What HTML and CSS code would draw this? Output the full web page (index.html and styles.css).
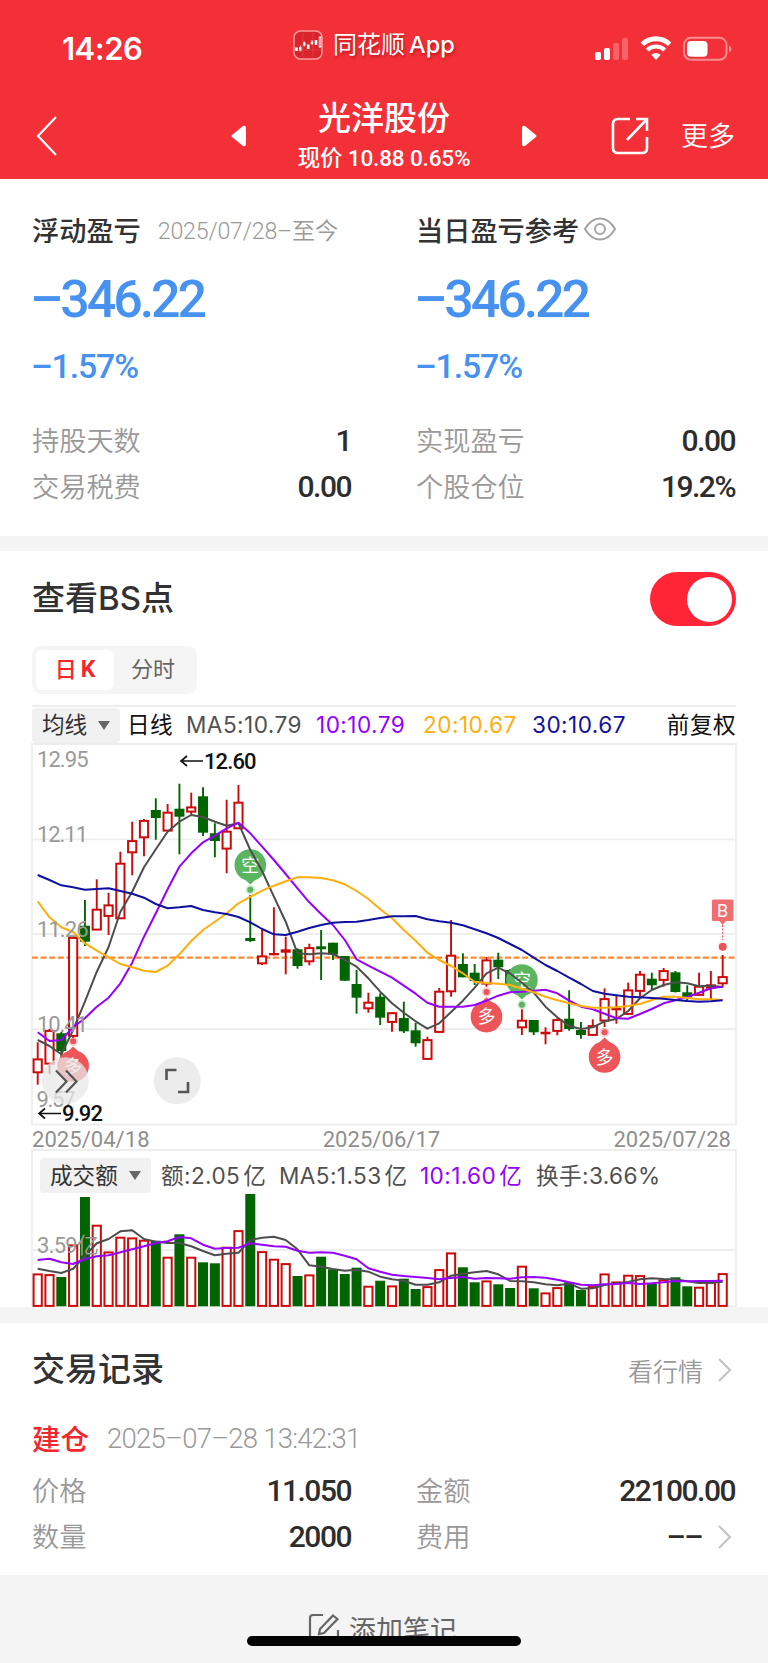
FILE: index.html
```html
<!DOCTYPE html>
<html lang="zh-CN">
<head>
    <meta charset="UTF-8">
    <meta name="viewport" content="width=device-width, initial-scale=1.0">
    <title>光洋股份</title>
    <link rel="stylesheet" href="styles.css">
</head>
<body>
    <header class="header">
        <div class="status">
            <span class="clock">14:26</span>
            <div class="app">
                <svg class="app-icon" width="30" height="30" viewBox="0 0 30 30">
                    <rect x="1" y="1" width="28" height="28" rx="6.5" fill="#d9242b" stroke="#ff9a9a" stroke-width="1.5"/>
                    <path d="M2 20h26M10 3v24M20 3v24" stroke="#ee4a50" stroke-width=".6"/>
                    <path d="M3.500 17.500v3.500M15.200 14.500v4.500M23 10v5" stroke="#fff" stroke-width="2.600"/>
                    <path d="M7.300 17v3.500M11.300 12.500v3M19 11.500v2.500M27 6.500v11" stroke="#fff" stroke-width="2.400"/>
                    <path d="M7.300 15.500v6M11.300 11.500v5M19 10v5" stroke="#fff" stroke-width=".8"/>
                    <path d="M27 8v8" stroke="#d9242b" stroke-width=".8"/>
                </svg>
                <span class="app-name">同花顺<b>App</b></span>
            </div>
            <svg class="status-icons" width="138" height="28" viewBox="0 0 138 28">
                <rect x="1" y="17" width="6" height="8" rx="1.800" fill="#fff"/>
                <rect x="10" y="13" width="6" height="12" rx="1.800" fill="#fff"/>
                <rect x="19" y="8" width="6" height="17" rx="1.800" fill="#fff" opacity=".25"/>
                <rect x="28" y="3" width="6" height="22" rx="1.800" fill="#fff" opacity=".25"/>
                <path d="M48.300 9.200a20 20 0 0 1 27.400 0" fill="none" stroke="#fff" stroke-width="5"/>
                <path d="M53.300 15a12.500 12.500 0 0 1 17.400 0" fill="none" stroke="#fff" stroke-width="4.200"/>
                <path d="M57.300 19.800q4.700-3.600 9.400 0L62 25z" fill="#fff"/>
                <rect x="90" y="2.800" width="42.500" height="22" rx="7" fill="none" stroke="#fff" stroke-opacity=".45" stroke-width="2"/>
                <rect x="93" y="6" width="20.500" height="15.800" rx="4" fill="#fff"/>
                <path d="M135 10.500q2.500 1 2.500 3.500t-2.500 3.500z" fill="#fff" opacity=".5"/>
            </svg>
        </div>
        <div class="nav">
            <svg class="back" width="24" height="42" viewBox="0 0 24 42"><path d="M21 2L3 21l18 19" fill="none" stroke="#fff" stroke-width="2.200"/></svg>
            <svg class="prev" width="17" height="24" viewBox="0 0 17 24"><path d="M13 2L2 11q-1 1 0 2l11 9q3 1 3-2V4q0-3-3-2z" fill="#fff"/></svg>
            <div class="stock">
                <h1>光洋股份</h1>
                <p>现价 10.88 0.65%</p>
            </div>
            <svg class="next" width="17" height="24" viewBox="0 0 17 24"><path d="M4 2l11 9q1 1 0 2L4 22q-3 1-3-2V4q0-3 3-2z" fill="#fff"/></svg>
            <svg class="share" width="38" height="38" viewBox="0 0 38 38" fill="none" stroke="#fff" stroke-width="2.600">
                <path d="M19 2H7Q2 2 2 7v24q0 5 5 5h24q5 0 5-5V20"/>
                <path d="M25 2h11v12M36 2L16 23"/>
            </svg>
            <span class="more">更多</span>
        </div>
    </header>

    <section class="summary">
        <div class="col">
            <div class="label-row"><h3>浮动盈亏</h3><span class="period">2025/07/28–至今</span></div>
            <p class="profit">–346.22</p>
            <p class="rate">–1.57%</p>
            <div class="row"><span>持股天数</span><b>1</b></div>
            <div class="row"><span>交易税费</span><b>0.00</b></div>
        </div>
        <div class="col">
            <div class="label-row"><h3>当日盈亏参考</h3>
                <svg class="eye" width="34" height="26" viewBox="0 0 34 26" fill="none" stroke="#a3a3a3" stroke-width="2">
                    <path d="M2 13Q8 2.500 17 2.500T32 13Q26 23.500 17 23.500T2 13z"/>
                    <circle cx="17" cy="13" r="5"/>
                </svg>
            </div>
            <p class="profit">–346.22</p>
            <p class="rate">–1.57%</p>
            <div class="row"><span>实现盈亏</span><b>0.00</b></div>
            <div class="row"><span>个股仓位</span><b>19.2%</b></div>
        </div>
    </section>

    <section class="bs">
        <div class="bs-head">
            <h2>查看BS点</h2>
            <div class="toggle"><i></i></div>
        </div>
        <div class="tabs"><span class="tab active">日<em>K</em></span><span class="tab">分时</span></div>
        <div class="ma-bar">
            <span class="chip">均线<i class="caret"></i></span>
            <span class="black">日线</span>
            <span>MA5:10.79</span>
            <span class="purple">10:10.79</span>
            <span class="orange">20:10.67</span>
            <span class="navy">30:10.67</span>
            <span class="black right">前复权</span>
        </div>
        <svg id="kline" class="chart" width="706" height="383" viewBox="31 743 706 383"></svg>
        <div class="dates"><span>2025/04/18</span><span>2025/06/17</span><span>2025/07/28</span></div>
        <div class="vol-bar">
            <span class="chip">成交额<i class="caret"></i></span>
            <span>额:2.05<s></s>亿</span>
            <span>MA5:1.53<s></s>亿</span>
            <span class="purple">10:1.60<s></s>亿</span>
            <span>换手:3.66%</span>
        </div>
        <svg id="volume" class="chart" width="706" height="114" viewBox="31 1193 706 114"></svg>
    </section>

    <section class="records">
        <div class="rec-head">
            <h2>交易记录</h2>
            <span class="link">看行情<svg width="16" height="26" viewBox="0 0 16 26"><path d="M2 2l11 11L2 24" fill="none" stroke="#c4c4c4" stroke-width="2.200"/></svg></span>
        </div>
        <div class="rec-time"><b>建仓</b><span>2025–07–28 13:42:31</span></div>
        <div class="rec-grid">
            <div class="row"><span>价格</span><b>11.050</b></div>
            <div class="row"><span>金额</span><b>22100.00</b></div>
            <div class="row"><span>数量</span><b>2000</b></div>
            <div class="row"><span>费用</span><b class="fee">––<svg width="16" height="26" viewBox="0 0 16 26"><path d="M2 2l11 11L2 24" fill="none" stroke="#c4c4c4" stroke-width="2.200"/></svg></b></div>
        </div>
    </section>

    <footer class="note">
        <svg width="32" height="34" viewBox="0 0 32 34" fill="none" stroke="#666" stroke-width="2.200">
            <path d="M15 2H5Q2 2 2 5v24q0 3 3 3h22q3 0 3-3V17"/>
            <path d="M25 2.500l4.500 3.500L16 20l-5 1 1-5z"/>
        </svg>
        <span>添加笔记</span>
        <div class="home-bar"></div>
    </footer>
    <script src="chart.js"></script>
</body>
</html>
```

FILE: styles.css
```css
* {
    box-sizing: border-box;
}
body {
    margin: 0;
    width: 768px;
    height: 1663px;
    overflow: hidden;
    background: #f4f4f4;
    color: #323232;
    font-family: Roboto, "Noto Sans CJK SC", sans-serif;
}
h1, h2, h3, p {
    margin: 0;
    font-weight: 500;
}
svg {
    display: block;
    flex: none;
}

/* header */
.header {
    height: 179px;
    background: #f33037;
    color: #fff;
}
.status {
    height: 90px;
    display: flex;
    align-items: flex-start;
    padding: 29px 36px 0 62px;
}
.clock {
    width: 231px;
    font: 600 31px/40px Inter, sans-serif;
    letter-spacing: -.5px;
}
.app {
    display: flex;
    align-items: center;
    gap: 10px;
    width: 301px;
}
.app-name {
    font-size: 24px;
    line-height: 32px;
    text-shadow: 1px 2px 3px #8008;
    white-space: nowrap;
}
.app-name b {
    font: 500 23.5px Inter, sans-serif;
    margin-left: 4px;
}
.status-icons {
    margin-top: 6px;
}
.nav {
    height: 89px;
    display: flex;
    align-items: center;
    padding: 2px 33px 0 35px;
}
.prev {
    margin-left: 171px;
}
.stock {
    width: 274px;
    text-align: center;
}
.stock h1 {
    font-size: 33px;
    line-height: 42px;
}
.stock p {
    font-size: 22.5px;
    line-height: 30px;
    margin-top: 3px;
    letter-spacing: -.15px;
}
.share {
    margin-left: 73px;
}
.more {
    margin-left: auto;
    padding-bottom: 2px;
    font-size: 27px;
    font-weight: 350;
}

/* summary */
.summary {
    height: 357px;
    background: #fff;
    display: grid;
    grid-template-columns: 319px 319px;
    gap: 65px;
    padding: 29px 33px 0 32px;
}
.label-row {
    display: flex;
    align-items: center;
    height: 42px;
    white-space: nowrap;
}
h3 {
    font-size: 27.2px;
}
.period {
    margin-left: 17px;
    font-size: 23.2px;
    font-weight: 350;
    color: #999;
    letter-spacing: -.2px;
}
.eye {
    margin-left: 4px;
}
.profit {
    height: 60px;
    line-height: 60px;
    margin: 20px 0 0 -2px;
    font-size: 52px;
    color: #4792f0;
    letter-spacing: -3.1px;
}
.rate {
    height: 40px;
    line-height: 40px;
    margin: 17px 0 30px -1px;
    font-size: 33.8px;
    color: #4792f0;
    letter-spacing: -1.1px;
}
.row {
    display: flex;
    align-items: center;
    justify-content: space-between;
    height: 46.5px;
    font-size: 27.2px;
    font-weight: 350;
    color: #999;
}
.row span {
    padding-bottom: 3px;
}
.row b {
    font-size: 30px;
    font-weight: 500;
    letter-spacing: -1.5px;
    color: #2d2d2d;
}

/* bs chart */
.bs {
    height: 756px;
    margin-top: 15px;
    background: #fff;
    padding: 21px 31px 0 31px;
}
.bs-head {
    display: flex;
    justify-content: space-between;
    align-items: center;
    height: 54px;
    padding: 0 1px;
}
h2 {
    font: 500 33px/46px Inter, "Noto Sans CJK SC", sans-serif;
    padding-bottom: 3px;
}
.toggle {
    width: 86px;
    height: 54px;
    border-radius: 27px;
    background: #ff2436;
    padding: 4.5px;
    display: flex;
    justify-content: flex-end;
}
.toggle i {
    width: 45px;
    height: 45px;
    border-radius: 50%;
    background: #fff;
}
.tabs {
    display: flex;
    width: 165px;
    height: 48px;
    margin: 20px 0 11px 1px;
    padding: 4px;
    border-radius: 9px;
    background: #f5f5f5;
}
.tab {
    width: 78px;
    border-radius: 6px;
    font-size: 22px;
    line-height: 40px;
    text-align: center;
    color: #666;
}
.tab.active {
    background: #fff;
    color: #f2262d;
    font-weight: 500;
}
.tab em {
    font: bold 23px Roboto, sans-serif;
    margin-left: 4px;
}
.ma-bar {
    display: grid;
    grid-template-columns: 95px 59px 130px 107px 109px 100px 1fr;
    align-items: center;
    height: 38px;
    margin: 0 1px;
    border-top: 2px solid #eee;
    font: 22.6px/34px Inter, "Noto Sans CJK SC", sans-serif;
    letter-spacing: .45px;
    color: #505050;
    white-space: nowrap;
}
.chip {
    display: flex;
    align-items: center;
    justify-content: space-between;
    width: 88px;
    height: 35px;
    padding: 0 10px;
    background: #f1f1f1;
    border-radius: 4px;
    color: #333;
    letter-spacing: 0;
}
.caret {
    border: 6.5px solid transparent;
    border-top: 9px solid #666;
    border-bottom: 0;
}
.black {
    color: #111;
}
.right {
    text-align: right;
}
.purple {
    color: #9500ff;
}
.orange {
    color: #ffae0d;
}
.navy {
    color: #11119c;
}
.dates {
    display: flex;
    justify-content: space-between;
    height: 23px;
    padding: 0 6px 0 1px;
    font-size: 22px;
    line-height: 27px;
    letter-spacing: .05px;
    color: #8f8f8f;
}
.vol-bar {
    display: grid;
    grid-template-columns: 121px 118px 141px 116px 1fr;
    height: 44px;
    padding: 7px 0 0 7px;
    border: 2px solid #eee;
    border-bottom: 0;
    font: 22.6px/36px Inter, "Noto Sans CJK SC", sans-serif;
    letter-spacing: .4px;
    color: #505050;
    white-space: nowrap;
}
.vol-bar .chip {
    width: 111px;
}
.vol-bar s {
    margin-left: 3px;
}
.chart text {
    font-family: Roboto, "Noto Sans CJK SC", sans-serif;
    font-size: 22px;
}
.axis {
    fill: #999;
}
.peak {
    font-weight: 500;
    fill: #111;
}

/* records */
.records {
    height: 252px;
    margin-top: 16px;
    background: #fff;
    padding: 22px 33px 0 32px;
}
.rec-head {
    display: flex;
    align-items: center;
    justify-content: space-between;
    height: 50px;
}
.link {
    display: flex;
    align-items: center;
    gap: 14px;
    padding-right: 2px;
    font-size: 25px;
    font-weight: 350;
    color: #999;
}
.rec-time {
    display: flex;
    align-items: center;
    height: 44px;
    margin-top: 21px;
}
.rec-time b {
    font-size: 28.5px;
    font-weight: 500;
    padding-bottom: 2px;
    color: #f3272e;
}
.rec-time span {
    margin-left: 18px;
    font-size: 27.5px;
    font-weight: 350;
    color: #999;
    letter-spacing: -.75px;
}
.rec-grid {
    display: grid;
    grid-template-columns: 319px 319px;
    column-gap: 65px;
    margin-top: 7px;
}
.row .fee {
    display: flex;
    align-items: center;
    gap: 15px;
    padding-right: 2px;
}

/* footer */
.note {
    display: flex;
    justify-content: center;
    height: 88px;
    padding: 38px 3px 0 0;
    gap: 9px;
    font-size: 27px;
    line-height: 36px;
    color: #666;
    position: relative;
}
.home-bar {
    position: absolute;
    left: 247px;
    top: 61px;
    width: 274px;
    height: 10px;
    border-radius: 5px;
    background: #050505;
}
```

FILE: chart.js
```js
const STEP = 11.81, X0 = 37.7;
const RED = '#cc0a0a', GREEN = '#006400';
const px = i => X0 + i * STEP;

// color, high, body top, body bottom, low
const candles = [
    ['r',1042.3,1059,1072.7,1084.7],['r',1029,1030.5,1064,1074],['g',1032,1033.3,1051,1056.7],['r',937,937.5,1036.3,1038],
    ['g',900,925.7,941.7,946],['r',879.3,909.3,930,930],['r',892.7,905,916.3,935],['r',851.7,863.3,918.7,918.7],
    ['r',821.7,840.7,852.7,875.3],['r',819,820.5,837.7,856.3],['g',798.3,810,818,839.7],['r',804,812.3,831,831],
    ['g',783.7,808.7,816.7,854.3],['r',792.7,807,812,814.3],['g',787.3,796.3,832.7,836],['g',823.3,833.3,841,857.3],
    ['r',799.7,831.3,849,873.3],['r',785,802.3,828.7,828.7],['g',895,938,941,942],['r',929,956,963.7,965],
    ['r',907.3,953,955.3,955.3],['r',936.7,949.3,952.7,974.3],['g',948.3,949.3,966,968.7],['r',943.7,947.7,961.7,965.3],
    ['g',930,946.3,949.3,980],['g',942.7,942.7,954.7,960],['g',956,956,980.7,981],['g',970,984,997.7,1013.7],
    ['r',992.7,1002.3,1008.7,1012.7],['g',993.3,996.7,1017.7,1025],['r',1012.3,1012.8,1022.3,1031.7],['g',1001.7,1018,1031.3,1033],
    ['g',1023,1030.3,1043.3,1046.7],['r',1036.7,1039.7,1059.3,1059.3],['r',988,991.3,1032.3,1032.3],['r',920,955.3,991.7,996.7],
    ['g',953.3,964,977.3,977.3],['g',964,972.7,981,985],['r',957,960,984,986.7],['g',952.7,959.7,967.3,979],
    ['g',969,970,984,988],['r',1009.3,1020.3,1027.7,1035],['g',1020,1020,1032.3,1035],['r',1027.3,1031.7,1034.3,1044.3],
    ['r',1018.3,1019.7,1031.3,1035.3],['g',990.3,1018.7,1029,1030.7],['g',1022,1030,1035,1038.7],['r',1019.3,1025.7,1035.3,1036],
    ['r',988.3,998.7,1021,1027],['r',995.7,1008,1010.3,1023.7],['r',982.7,990,1014.3,1015],['r',971,974.3,991.3,996.3],
    ['g',972.7,978.7,985.3,990],['r',968,970.7,980.3,986.7],['g',971,972.3,992,992.5],['g',985.3,992.3,997.3,1000],
    ['r',972.7,986.3,995.3,996],['r',971,984.3,988.7,999],['r',955,976.7,983.7,987.3]
];
const volTop = [1274,1274.7,1277,1245,1197,1225.3,1252,1237.3,1238,1240.3,1240.7,1257.3,1234.3,1257.3,1262.3,1263.3,1247.3,1230.7,1194,1251.7,
    1259.3,1263.7,1276,1275,1256.7,1269.3,1274,1267.7,1286.3,1280.7,1286,1278.7,1289,1286.7,1269.7,1253,1267.3,1282.3,1281,1284.3,
    1288,1266.3,1288.3,1293,1287.7,1282.3,1290,1286.7,1274,1282,1275.3,1275.7,1284,1280,1277.3,1286.3,1287.3,1282.3,1273.7];

const ma5 = [1040,1046,1054.3,1030,1001.7,971.7,947,911.7,891.7,867.3,849.3,831.7,821.7,815,817,821.7,825.7,823.3,850,871,
    896.7,921.7,953.3,954.3,953.3,954,960,966.7,978.3,991.7,1003.3,1012.7,1021.3,1028.7,1023.3,1012,1000.7,987.7,973.3,967.7,
    973.5,982.7,992.7,1006.7,1017.3,1026,1029,1027.3,1021.3,1019,1011,998.3,990,985,982.3,983.3,986.3,985.7,987];
const ma10 = [1032.3,1041,1040,1027.3,1018.3,1006.7,997.7,983.3,962.7,936.7,913.3,889.3,866.7,853.3,842.3,835.7,828.3,822.7,833.3,846.7,
    860,874,888.3,902.3,914,925,940,959.3,965.7,971.7,977.7,985.7,993.7,1002.7,1006.7,1006.7,1006.7,1005,1000.7,995.7,
    992.3,991.7,990.7,989.7,993.3,1000.7,1006.7,1009.3,1013.7,1018.3,1018.7,1014,1009,1003.3,1000.3,996.7,992.7,988.3,986.7];
const ma20 = [901.3,917.3,927.3,932,943.3,950.7,957.3,964,967.3,970.7,972,965.7,954.3,941,930,921.7,913.3,903.3,896.7,890.7,
    885.7,881.3,877.3,877.3,878,880.3,884.3,891,899,909.3,918.3,930,940.7,952.7,960,966,973.3,982,983,983.7,
    985,988.7,992.3,996.7,1000.3,1003.3,1006,1007.7,1007.7,1007.3,1006,1004,1000,996.7,996.7,998,999.3,999.3,1000];
const ma30 = [875,880,885.3,887.3,889.7,889,888.3,891,893.7,897.7,904,908.3,907.3,906,910,912.3,914,917,922.3,929,
    934.3,935,931.7,928,925,922.7,922,921.7,920,918,916.3,916.3,916,919.3,921.3,922.7,925.3,929.3,933.3,938,
    944,950,957.7,965,971,977.7,984,991,993.7,995.3,996.7,997.3,998,998.7,1000,1001,1001.7,1001.3,1000.3];
const vol5 = [1268.7,1271,1273,1268.7,1256,1243.3,1239,1231.3,1230.3,1239,1241.7,1243,1243,1246.3,1251,1255.3,1253.7,1252.7,1240,1237.7,
    1236.7,1240,1249.3,1265.3,1266.7,1269,1270.7,1269.7,1271.7,1276.7,1279.3,1280.7,1284.7,1284.7,1282.3,1275.7,1273.7,1272.3,1271,1274.3,
    1281,1281.3,1282.3,1284.3,1285.3,1283.7,1288.7,1288.3,1285,1283.3,1282,1279.3,1278.3,1279,1279.3,1281.3,1283,1282.7,1281.7];
const vol10 = [1260,1258.7,1262.3,1264,1259,1256.3,1255.3,1252.3,1249.3,1246.3,1243,1241.3,1237,1238.3,1244.7,1248.7,1248,1247.7,1243.3,1244.7,
    1246.3,1246.7,1250.7,1252.7,1252.3,1252.7,1255.7,1259.3,1268.3,1271.7,1274.7,1276,1277,1278,1279.3,1278,1277,1278.7,1278,1278.3,
    1278.7,1277.3,1277,1277.7,1279.7,1282.3,1284.7,1285.3,1284.3,1284,1283,1284,1283.3,1282.3,1281,1281.3,1281,1281,1280.7];

function line(data, color) {
    const pts = data.map((y, i) => px(i).toFixed(1) + ',' + y).join(' ');
    return `<polyline points="${pts}" fill="none" stroke="${color}" stroke-width="2" stroke-linejoin="round"/>`;
}

function body(x, top, bottom, color) {
    if (color === 'g') return `<rect x="${x - 5}" y="${top}" width="10" height="${bottom - top}" fill="${GREEN}"/>`;
    if (bottom - top < 4.5) return `<rect x="${x - 5}" y="${top}" width="10" height="${bottom - top}" fill="${RED}"/>`;
    return `<rect x="${x - 4.1}" y="${top + .4}" width="8.2" height="${bottom - top - .8}" fill="#fff" stroke="${RED}" stroke-width="2"/>`;
}

function pin(i, cy, up, text) {
    const x = px(i), color = up ? '#ed5558' : '#5ab55e', d = up ? -1 : 1;
    return `<g fill="${color}"><circle cx="${x}" cy="${cy}" r="15.8"/>
        <path d="M${x - 7} ${cy + d * 13}L${x} ${cy + d * 19.5}L${x + 7} ${cy + d * 13}z"/>
        <circle cx="${x}" cy="${cy + d * 24.7}" r="4.7" opacity=".3"/><circle cx="${x}" cy="${cy + d * 24.7}" r="3"/>
        <text x="${x}" y="${cy + 6.5}" text-anchor="middle" style="font-size:18px" fill="#fff">${text}</text></g>`;
}

const label = (x, y, text, cls, w) => `<text class="${cls}" x="${x}" y="${y}" textLength="${w}">${text}</text>`;
const arrow = (x, y) => `<path d="M${x + 22} ${y}H${x}m6-5l-6 5 6 5" fill="none" stroke="#111" stroke-width="1.7"/>`;

let k = '<path d="M32 744H736V1124.500H32zM32 839.300H736M32 934H736M32 1029H736" fill="none" stroke="#eee" stroke-width="1.800"/>';
k += '<path d="M32 957.600H736" stroke="#ff8a33" stroke-width="2.200" stroke-dasharray="6 2.600"/>';
candles.forEach(([c, high, top, bottom, low], i) => {
    const x = px(i);
    k += `<path d="M${x} ${high}V${low}" stroke="${c === 'r' ? RED : GREEN}" stroke-width="1.9"/>` + body(x, top, bottom, c);
});
k += pin(3, 1066, true, '多') + pin(18, 865, false, '空') + pin(38, 1016.7, true, '多') + pin(41, 980, false, '空') + pin(48, 1057, true, '多');
k += line(ma5, '#4d4d4d') + line(ma10, '#9500ff') + line(ma20, '#ffae0d') + line(ma30, '#1010a0');
k += `<path d="M722.700 925V940" stroke="#ed5558" stroke-width="1.200" stroke-dasharray="2 1.500"/><circle cx="722.700" cy="946.700" r="4" fill="#ed5558"/>
    <path d="M713.500 899.500h18.500q1.500 0 1.500 1.500v18.500q0 1.500-1.500 1.500h-6l-3.300 4-3.300-4h-6q-1.500 0-1.500-1.500V901q0-1.500 1.500-1.500z" fill="#f16e70"/>
    <text x="722.700" y="916.500" text-anchor="middle" style="font-size:18px" fill="#fff">B</text>`;
k += label(37, 766.700, '12.95', 'axis', 51.500) + label(37, 842, '12.11', 'axis', 51) + label(37, 936.700, '11.26', 'axis', 51.500) + label(37, 1032, '10.41', 'axis', 51);
k += label(36.500, 1107.300, '9.57', 'axis', 39);
// floating controls over the chart
k += `<g fill="none" stroke="#555" stroke-width="2.200"><circle cx="65.300" cy="1080.700" r="23.500" fill="#e8e8e8" fill-opacity=".75" stroke="none"/>
    <path d="M56 1070.500l10.500 11-10.500 11M66 1070.500l10.500 11-10.500 11"/>
    <circle cx="177.300" cy="1080.700" r="23.500" fill="#ececec" stroke="none"/>
    <path d="M166.500 1080v-10h10M188 1082v10h-10" stroke-width="2.600"/></g>`;
k += arrow(181, 761) + label(204, 769, '12.60', 'peak', 52.500) + arrow(39, 1113.500) + label(62, 1121.300, '9.92', 'peak', 41);
document.getElementById('kline').innerHTML = k;

let v = '<path d="M32 1193V1306.500H736V1193M32 1250H736" fill="none" stroke="#eee" stroke-width="1.800"/>';
volTop.forEach((top, i) => v += body(px(i), top, 1306.3, candles[i][0]));
v += line(vol5, '#4d4d4d') + line(vol10, '#9500ff') + label(37, 1253, '3.59亿', 'axis', 62);
document.getElementById('volume').innerHTML = v;
```
